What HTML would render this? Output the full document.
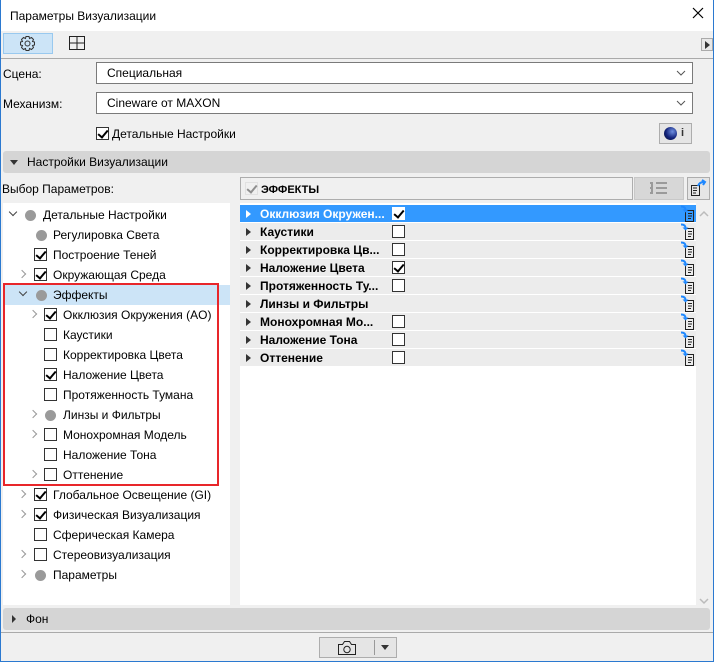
<!DOCTYPE html>
<html><head><meta charset="utf-8"><style>
*{box-sizing:border-box;margin:0;padding:0}
body{width:714px;height:662px;position:relative;background:#f0f0f0;font-family:"Liberation Sans","DejaVu Sans",sans-serif;font-size:12px;color:#000;overflow:hidden}
.a{position:absolute}
.t{position:absolute;white-space:nowrap;line-height:14px}
.cb{position:absolute;width:13px;height:13px;border:1px solid #333;background:#fff}
.cb.c::after{content:"";position:absolute;left:3px;top:0px;width:4px;height:8px;border:solid #000;border-width:0 2px 2px 0;transform:rotate(40deg)}
.dot{position:absolute;width:11px;height:11px;border-radius:50%;background:#9a9a9a}
.exp{position:absolute;width:6px;height:6px;border:solid #999;border-width:0 1.5px 1.5px 0}
.er{transform:rotate(-45deg)}
.ed{transform:rotate(45deg);border-color:#444}
.row{position:absolute;left:240px;width:456px;height:18px;background:#ececec;border-bottom:1px solid #fff;font-weight:bold}
.tri{position:absolute;left:6px;top:5px;width:0;height:0;border-left:5px solid #333;border-top:4px solid transparent;border-bottom:4px solid transparent}
.row .t{left:20px;top:2px}
.row .cb{left:152px;top:2px}
</style></head><body>
<div class="a" style="left:0;top:0;width:714px;height:662px;border:1px solid #2b79d0;border-top:none"></div>
<div class="a" style="left:1px;top:0;width:712px;height:31px;background:#fff"></div>
<div class="t" style="left:10px;top:9px;font-size:12px">Параметры Визуализации</div>
<svg class="a" style="left:692px;top:7px" width="12" height="12"><path d="M1 1l10 10M11 1L1 11" stroke="#000" stroke-width="1.2"/></svg>
<div class="a" style="left:3px;top:33px;width:50px;height:21px;background:#cce4f7;border:1px solid #99c9ef"></div>
<svg class="a" style="left:19px;top:35px" width="17" height="17" viewBox="0 0 17 17"><circle cx="8.5" cy="8.5" r="2.5" fill="none" stroke="#333"/><path d="M7 1.5h3l.5 2 2-1 2 2-1 2 2 .5v3l-2 .5 1 2-2 2-2-1-.5 2H7l-.5-2-2 1-2-2 1-2-2-.5v-3l2-.5-1-2 2-2 2 1z" fill="none" stroke="#333"/></svg>
<svg class="a" style="left:69px;top:36px" width="17" height="15"><rect x=".5" y=".5" width="15" height="13" fill="none" stroke="#222"/><path d="M8 1v12M1 7h14" stroke="#222"/></svg>
<div class="a" style="left:701px;top:38px;width:12px;height:13px;border:1px solid #aaa;background:#e8e8e8"></div>
<div class="a" style="left:705px;top:41px;border-left:5px solid #333;border-top:4px solid transparent;border-bottom:4px solid transparent"></div>
<div class="a" style="left:1px;top:58px;width:712px;height:1px;background:#aaa"></div>
<div class="t" style="left:3px;top:67px">Сцена:</div>
<div class="a" style="left:96px;top:62px;width:597px;height:22px;background:#fff;border:1px solid #7a7a7a"></div>
<div class="t" style="left:107px;top:66px">Специальная</div>
<div class="t" style="left:3px;top:97px">Механизм:</div>
<div class="a" style="left:96px;top:92px;width:597px;height:22px;background:#fff;border:1px solid #7a7a7a"></div>
<div class="t" style="left:107px;top:96px">Cineware от MAXON</div>
<svg class="a" style="left:676px;top:69px" width="10" height="40"><path d="M1 2l4 4 4-4M1 32l4 4 4-4" fill="none" stroke="#555"/></svg>
<div class="cb c" style="left:96px;top:127px"></div>
<div class="t" style="left:112px;top:127px">Детальные Настройки</div>
<div class="a" style="left:659px;top:123px;width:33px;height:21px;border:1px solid #adadad;background:#e5e5e5"></div>
<div class="a" style="left:664px;top:127px;width:13px;height:13px;border-radius:50%;background:radial-gradient(circle at 65% 35%,#6f8fe0,#12227a 55%,#081030)"></div>
<div class="t" style="left:681px;top:126px;font-weight:bold;font-size:11px;color:#333">i</div>
<div class="a" style="left:3px;top:151px;width:707px;height:22px;background:#d5d5d5;border-radius:3px"></div>
<div class="a" style="left:10px;top:160px;border-top:5px solid #333;border-left:4px solid transparent;border-right:4px solid transparent"></div>
<div class="t" style="left:27px;top:155px">Настройки Визуализации</div>
<div class="t" style="left:2px;top:182px">Выбор Параметров:</div>
<div class="a" style="left:240px;top:177px;width:393px;height:23px;border:1px solid #adadad;background:#f0f0f0"></div>
<div class="cb c" style="left:245px;top:182px;border-color:#ccc;background:#f0f0f0;opacity:.4"></div>
<div class="t" style="left:261px;top:183px;font-weight:bold;font-size:11px">ЭФФЕКТЫ</div>
<div class="a" style="left:634px;top:177px;width:50px;height:23px;border:1px solid #c8c8c8;background:#d7d7d7"></div>
<svg class="a" style="left:650px;top:182px" width="18" height="13"><path d="M0 1h3M0 6h3M0 11h3M2 1v10M6 1h11M6 6h11M6 11h11" stroke="#9a9a9a" stroke-width="2"/></svg>
<div class="a" style="left:687px;top:177px;width:23px;height:23px;border:1px solid #adadad;background:#e5e5e5"></div>
<svg class="a" style="left:690px;top:179px" width="17" height="18"><path d="M1.5 6.5h8v10h-8zM3 9h4M3 11.5h4M3 14h3" fill="none" stroke="#222"/><path d="M8 7c1-3 3-4 6-4M12 1l3 2-2 3" fill="none" stroke="#1e88ff" stroke-width="2"/></svg>
<div class="a" style="left:3px;top:203px;width:227px;height:402px;background:#fff"></div>
<div class="a" style="left:3px;top:285px;width:227px;height:20px;background:#cce4f7"></div>
<div class="a" style="left:3px;top:283px;width:216px;height:203px;border:2px solid #e8262a"></div>
<div class="a" style="left:240px;top:203px;width:456px;height:402px;background:#fff"></div>
<div class="exp ed" style="left:10px;top:209px"></div><div class="dot" style="left:25px;top:210px"></div><div class="t" style="left:43px;top:208px">Детальные Настройки</div>
<div class="dot" style="left:36px;top:230px"></div><div class="t" style="left:53px;top:228px">Регулировка Света</div>
<div class="cb c" style="left:34px;top:248px"></div><div class="t" style="left:53px;top:248px">Построение Теней</div>
<div class="exp er" style="left:19px;top:271px"></div><div class="cb c" style="left:34px;top:268px"></div><div class="t" style="left:53px;top:268px">Окружающая Среда</div>
<div class="exp ed" style="left:20px;top:289px"></div><div class="dot" style="left:36px;top:290px"></div><div class="t" style="left:53px;top:288px">Эффекты</div>
<div class="exp er" style="left:30px;top:311px"></div><div class="cb c" style="left:44px;top:308px"></div><div class="t" style="left:63px;top:308px">Окклюзия Окружения (AO)</div>
<div class="cb" style="left:44px;top:328px"></div><div class="t" style="left:63px;top:328px">Каустики</div>
<div class="cb" style="left:44px;top:348px"></div><div class="t" style="left:63px;top:348px">Корректировка Цвета</div>
<div class="cb c" style="left:44px;top:368px"></div><div class="t" style="left:63px;top:368px">Наложение Цвета</div>
<div class="cb" style="left:44px;top:388px"></div><div class="t" style="left:63px;top:388px">Протяженность Тумана</div>
<div class="exp er" style="left:30px;top:411px"></div><div class="dot" style="left:45px;top:410px"></div><div class="t" style="left:63px;top:408px">Линзы и Фильтры</div>
<div class="exp er" style="left:30px;top:431px"></div><div class="cb" style="left:44px;top:428px"></div><div class="t" style="left:63px;top:428px">Монохромная Модель</div>
<div class="cb" style="left:44px;top:448px"></div><div class="t" style="left:63px;top:448px">Наложение Тона</div>
<div class="exp er" style="left:30px;top:471px"></div><div class="cb" style="left:44px;top:468px"></div><div class="t" style="left:63px;top:468px">Оттенение</div>
<div class="exp er" style="left:19px;top:491px"></div><div class="cb c" style="left:34px;top:488px"></div><div class="t" style="left:53px;top:488px">Глобальное Освещение (GI)</div>
<div class="exp er" style="left:19px;top:511px"></div><div class="cb c" style="left:34px;top:508px"></div><div class="t" style="left:53px;top:508px">Физическая Визуализация</div>
<div class="cb" style="left:34px;top:528px"></div><div class="t" style="left:53px;top:528px">Сферическая Камера</div>
<div class="exp er" style="left:19px;top:551px"></div><div class="cb" style="left:34px;top:548px"></div><div class="t" style="left:53px;top:548px">Стереовизуализация</div>
<div class="exp er" style="left:19px;top:571px"></div><div class="dot" style="left:35px;top:570px"></div><div class="t" style="left:53px;top:568px">Параметры</div>
<div class="row" style="top:205px;background:#3399ff;color:#fff"><div class="tri" style="border-left-color:#fff"></div><div class="t">Окклюзия Окружен...</div><div class="cb c" style="border-color:#fff"></div></div>
<div class="row" style="top:223px"><div class="tri"></div><div class="t">Каустики</div><div class="cb"></div></div>
<div class="row" style="top:241px"><div class="tri"></div><div class="t">Корректировка Цв...</div><div class="cb"></div></div>
<div class="row" style="top:259px"><div class="tri"></div><div class="t">Наложение Цвета</div><div class="cb c"></div></div>
<div class="row" style="top:277px"><div class="tri"></div><div class="t">Протяженность Ту...</div><div class="cb"></div></div>
<div class="row" style="top:295px"><div class="tri"></div><div class="t">Линзы и Фильтры</div></div>
<div class="row" style="top:313px"><div class="tri"></div><div class="t">Монохромная Мо...</div><div class="cb"></div></div>
<div class="row" style="top:331px"><div class="tri"></div><div class="t">Наложение Тона</div><div class="cb"></div></div>
<div class="row" style="top:349px"><div class="tri"></div><div class="t">Оттенение</div><div class="cb"></div></div>
<svg class="a" style="left:680px;top:205px" width="16" height="162">
<defs><g id="li"><path d="M5.5 5.5h8v11h-8zM8 8.5h4M8 11h4M8 13.5h3" fill="none" stroke="#222"/><path d="M1 1.5c3 0 4.5 1 4.5 3.5" fill="none" stroke="#1e88ff" stroke-width="2"/><path d="M2.5 4.5h6l-3 3z" fill="#1e88ff"/></g></defs>
<use href="#li" y="0"/><use href="#li" y="18"/><use href="#li" y="36"/><use href="#li" y="54"/><use href="#li" y="72"/><use href="#li" y="90"/><use href="#li" y="108"/><use href="#li" y="126"/><use href="#li" y="144"/>
</svg>
<svg class="a" style="left:699px;top:210px" width="10" height="400"><path d="M1 6l4-4 4 4M1 389l4 4 4-4" fill="none" stroke="#bbb" stroke-width="1.5"/></svg>
<div class="a" style="left:3px;top:608px;width:707px;height:22px;background:#d5d5d5;border-radius:3px"></div>
<div class="a" style="left:12px;top:615px;border-left:4px solid #333;border-top:4px solid transparent;border-bottom:4px solid transparent"></div>
<div class="t" style="left:26px;top:612px">Фон</div>
<div class="a" style="left:1px;top:632px;width:712px;height:1px;background:#aaa"></div>
<div class="a" style="left:319px;top:637px;width:78px;height:21px;border:1px solid #adadad;background:#e5e5e5"></div>
<svg class="a" style="left:337px;top:640px" width="20" height="16"><path d="M1.5 4.5h4l2-3h5l2 3h4v10h-17z" fill="none" stroke="#222"/><circle cx="10" cy="9.5" r="3.2" fill="none" stroke="#222"/></svg>
<div class="a" style="left:374px;top:640px;width:1px;height:15px;background:#999"></div>
<div class="a" style="left:381px;top:645px;border-top:5px solid #333;border-left:4px solid transparent;border-right:4px solid transparent"></div>
</body></html>
